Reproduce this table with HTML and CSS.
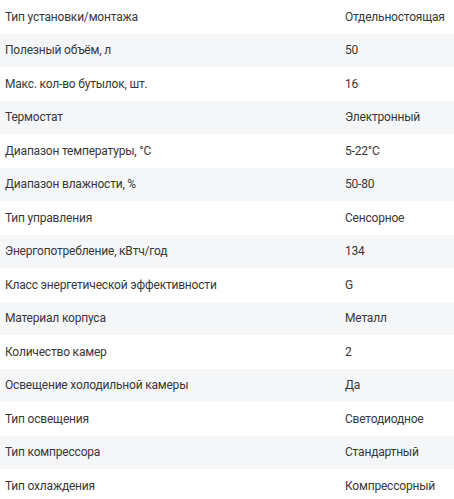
FILE: index.html
```html
<!DOCTYPE html>
<html lang="ru">
<head>
<meta charset="utf-8">
<link rel="stylesheet" href="styles.css">
</head>
<body>
<div class="specs">
  <div class="row"><div class="name">Тип установки/монтажа</div><div class="value">Отдельностоящая</div></div>
  <div class="row"><div class="name">Полезный объём, л</div><div class="value">50</div></div>
  <div class="row"><div class="name">Макс. кол-во бутылок, шт.</div><div class="value">16</div></div>
  <div class="row"><div class="name">Термостат</div><div class="value">Электронный</div></div>
  <div class="row"><div class="name">Диапазон температуры, °C</div><div class="value">5-22°C</div></div>
  <div class="row"><div class="name">Диапазон влажности, %</div><div class="value">50-80</div></div>
  <div class="row"><div class="name">Тип управления</div><div class="value">Сенсорное</div></div>
  <div class="row"><div class="name">Энергопотребление, кВтч/год</div><div class="value">134</div></div>
  <div class="row"><div class="name">Класс энергетической эффективности</div><div class="value">G</div></div>
  <div class="row"><div class="name">Материал корпуса</div><div class="value">Металл</div></div>
  <div class="row"><div class="name">Количество камер</div><div class="value">2</div></div>
  <div class="row"><div class="name">Освещение холодильной камеры</div><div class="value">Да</div></div>
  <div class="row"><div class="name">Тип освещения</div><div class="value">Светодиодное</div></div>
  <div class="row"><div class="name">Тип компрессора</div><div class="value">Стандартный</div></div>
  <div class="row"><div class="name">Тип охлаждения</div><div class="value">Компрессорный</div></div>
</div>
</body>
</html>
```
FILE: styles.css
```css
html, body {
  margin: 0;
  padding: 0;
  background: #ffffff;
}
body {
  font-family: Roboto, "Noto Sans", sans-serif;
  font-size: 12px;
  letter-spacing: -0.2px;
  color: #383838;
}
.specs {
  display: flex;
  flex-direction: column;
}
.row {
  display: grid;
  grid-template-columns: 345px 1fr;
  align-items: center;
  height: 33.5px;
}
.row:nth-child(even) {
  background: #f5f6f8;
}
.name {
  padding-left: 5px;
}
.value {
  white-space: nowrap;
}
```
